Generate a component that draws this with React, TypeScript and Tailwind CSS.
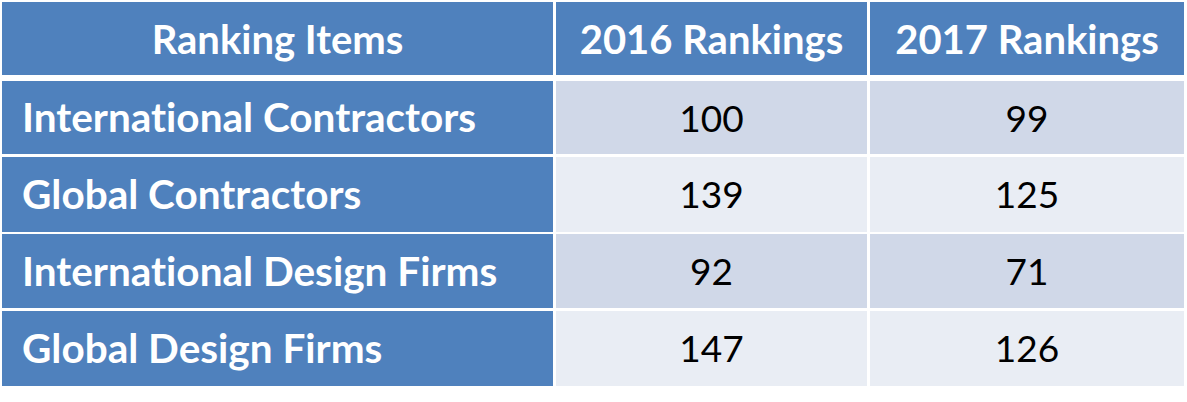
const rows = [
  { item: 'International Contractors', y2016: '100', y2017: '99', shade: 'bg-[#d0d8e8]', h: 'h-[73px]' },
  { item: 'Global Contractors', y2016: '139', y2017: '125', shade: 'bg-[#e9edf4]', h: 'h-[75px]' },
  { item: 'International Design Firms', y2016: '92', y2017: '71', shade: 'bg-[#d0d8e8]', h: 'h-[74px]' },
  { item: 'Global Design Firms', y2016: '147', y2017: '126', shade: 'bg-[#e9edf4]', h: 'h-[75px]' },
];

export default function App() {
  return (
    <div className="w-[1187px] h-[402px] bg-white pl-[2px] pt-[2px] font-['Lato','Open_Sans',sans-serif] [font-variant-ligatures:none]">
      <div className="flex flex-col w-[1182px]">
        <div className="grid grid-cols-[551px_311px_314px] gap-x-[3px] h-[73px] text-white font-bold text-[40px]">
          <div className="bg-[#4f81bd] flex items-center justify-center">Ranking Items</div>
          <div className="bg-[#4f81bd] flex items-center justify-center">2016 Rankings</div>
          <div className="bg-[#4f81bd] flex items-center justify-center">2017 Rankings</div>
        </div>
        <div className="flex flex-col gap-[2.5px] mt-[6px]">
          {rows.map((r) => (
            <div key={r.item} className={`grid grid-cols-[551px_311px_314px] gap-x-[3px] ${r.h}`}>
              <div className="bg-[#4f81bd] flex items-center pl-[20px] text-white font-bold text-[40.5px]">
                {r.item}
              </div>
              <div className={`${r.shade} flex items-center justify-center text-black text-[37px]`}>{r.y2016}</div>
              <div className={`${r.shade} flex items-center justify-center text-black text-[37px]`}>{r.y2017}</div>
            </div>
          ))}
        </div>
      </div>
    </div>
  );
}
